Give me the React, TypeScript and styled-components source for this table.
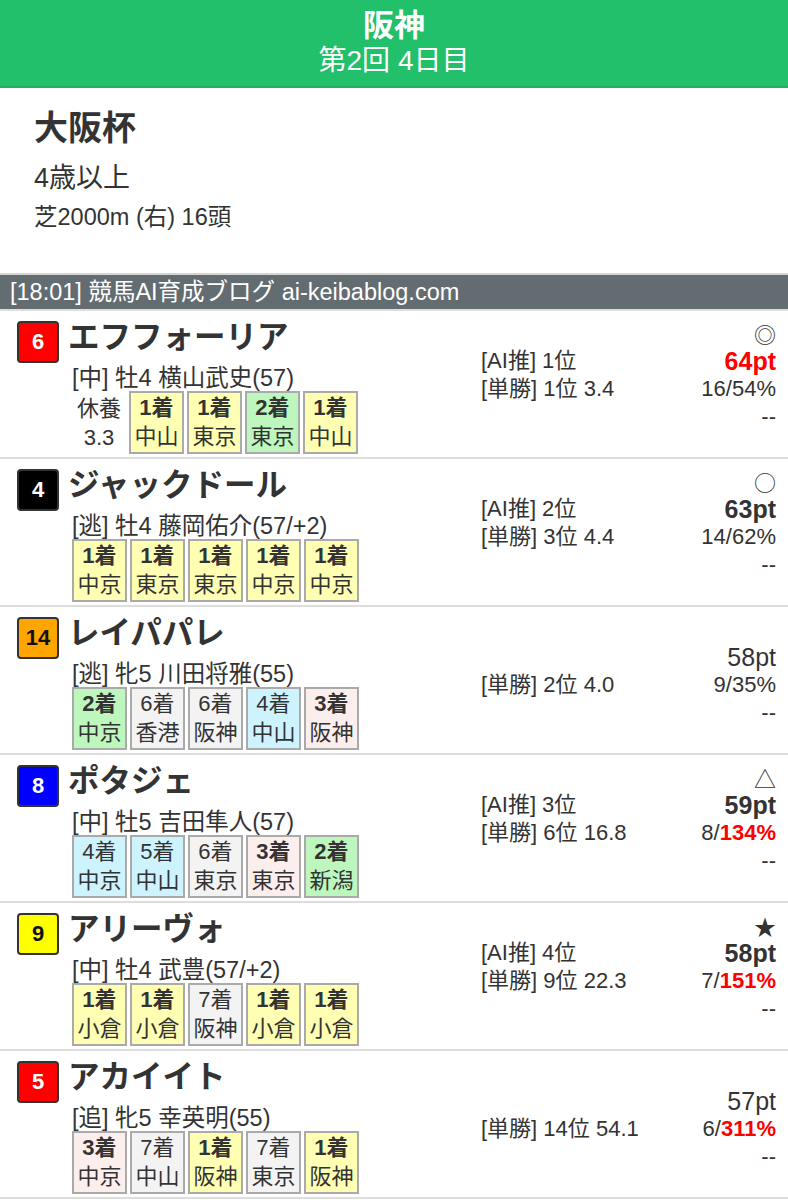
import React from "react";
import styled, { createGlobalStyle } from "styled-components";

const GlobalStyle = createGlobalStyle`
  body {
    margin: 0;
    background: #fff;
    color: #333;
    font-family: "Liberation Sans", "Noto Sans CJK JP", sans-serif;
  }
`;

const Header = styled.header`
  background: #22c06b;
  color: #fff;
  text-align: center;
  height: 88px;
  box-sizing: border-box;
  padding-top: 8px;
  border-bottom: 2px solid #1fb062;
`;

const Venue = styled.div`
  font-size: 31px;
  font-weight: bold;
  line-height: 36px;
`;

const Kai = styled.div`
  font-size: 28px;
  line-height: 34px;
`;

const RaceInfo = styled.section`
  padding: 20px 34px 42px;
`;

const RaceName = styled.div`
  font-size: 34px;
  font-weight: bold;
  line-height: 40px;
`;

const RaceCond = styled.div`
  font-size: 27px;
  line-height: 34px;
  margin-top: 13px;
`;

const RaceCourse = styled.div`
  font-size: 23.5px;
  line-height: 28px;
  margin-top: 8px;
`;

const InfoBar = styled.div`
  background: #636c71;
  color: #fff;
  font-size: 23.5px;
  line-height: 34px;
  padding: 0 10px;
  border-top: 2px solid #d5d5d5;
  border-bottom: 2px solid #dedede;
  white-space: nowrap;
`;

const Card = styled.div`
  display: grid;
  grid-template-columns: 464px 1fr auto;
  padding: 0 12px 3px 17px;
  border-bottom: 2px solid #dddddd;
  height: 148px;
  box-sizing: border-box;
`;

const LeftCol = styled.div`
  display: flex;
  flex-direction: column;
`;

const NameRow = styled.div`
  display: flex;
  align-items: flex-start;
  gap: 9px;
  padding-top: 10px;
`;

const NumBox = styled.div<{ $bg: string; $fg: string }>`
  width: 42px;
  height: 42px;
  box-sizing: border-box;
  border: 2px solid #333;
  border-radius: 4px;
  background: ${(p) => p.$bg};
  color: ${(p) => p.$fg};
  font-family: "Liberation Sans", sans-serif;
  font-size: 22px;
  font-weight: bold;
  display: flex;
  align-items: center;
  justify-content: center;
`;

const HorseName = styled.div`
  font-size: 31.5px;
  font-weight: bold;
  line-height: 36px;
  margin-top: -2px;
`;

const Sub = styled.div`
  padding-left: 55px;
`;

const Jockey = styled.div`
  font-size: 23.5px;
  line-height: 26px;
  margin-top: 2px;
  white-space: nowrap;
`;

const Results = styled.div`
  display: flex;
  align-items: center;
  gap: 3px;
`;

const Rest = styled.div`
  width: 54px;
  text-align: center;
  font-size: 22px;
  line-height: 29px;
`;

const ResultBox = styled.div<{ $bg: string }>`
  width: 55px;
  box-sizing: border-box;
  border: 2px solid #aaa;
  background: ${(p) => p.$bg};
  text-align: center;
  font-size: 22px;
  line-height: 29px;
  padding-bottom: 1px;
`;

const Rank = styled.div<{ $bold: boolean }>`
  font-weight: ${(p) => (p.$bold ? "bold" : "normal")};
`;

const MidCol = styled.div`
  padding-top: 36px;
  font-size: 22px;
`;

const Line = styled.div`
  height: 28px;
  line-height: 28px;
  white-space: nowrap;
`;

const RightCol = styled.div`
  padding-top: 8px;
  text-align: right;
  font-size: 22px;
`;

const Mark = styled.div`
  height: 28px;
  line-height: 28px;
  font-size: 22px;
  font-family: "Noto Sans CJK JP", sans-serif;
`;

const Pt = styled.div<{ $bold: boolean; $red: boolean }>`
  height: 28px;
  line-height: 28px;
  font-size: 25px;
  font-weight: ${(p) => (p.$bold ? "bold" : "normal")};
  color: ${(p) => (p.$red ? "#ff0000" : "#333")};
`;

const Red = styled.span`
  color: #ff0000;
  font-weight: bold;
`;

const resultColor = (r: number) => {
  if (r === 1) return "#ffffb3";
  if (r === 2) return "#bdf7bd";
  if (r === 3) return "#fdeeee";
  if (r <= 5) return "#cdf3ff";
  return "#f3f3f3";
};

type Horse = {
  num: number;
  bg: string;
  fg: string;
  name: string;
  info: string;
  rest?: [string, string];
  results: [number, string][];
  ai?: string;
  tan: string;
  mark?: string;
  pt: string;
  ptBold: boolean;
  ptRed?: boolean;
  hits: string;
  rate: string;
  rateRed?: boolean;
};

const horses: Horse[] = [
  {
    num: 6, bg: "#ff0000", fg: "#fff", name: "エフフォーリア",
    info: "[中] 牡4 横山武史(57)", rest: ["休養", "3.3"],
    results: [[1, "中山"], [1, "東京"], [2, "東京"], [1, "中山"]],
    ai: "[AI推] 1位", tan: "[単勝] 1位 3.4", mark: "◎",
    pt: "64pt", ptBold: true, ptRed: true, hits: "16/", rate: "54%",
  },
  {
    num: 4, bg: "#000000", fg: "#fff", name: "ジャックドール",
    info: "[逃] 牡4 藤岡佑介(57/+2)",
    results: [[1, "中京"], [1, "東京"], [1, "東京"], [1, "中京"], [1, "中京"]],
    ai: "[AI推] 2位", tan: "[単勝] 3位 4.4", mark: "○",
    pt: "63pt", ptBold: true, hits: "14/", rate: "62%",
  },
  {
    num: 14, bg: "#ffa500", fg: "#111", name: "レイパパレ",
    info: "[逃] 牝5 川田将雅(55)",
    results: [[2, "中京"], [6, "香港"], [6, "阪神"], [4, "中山"], [3, "阪神"]],
    tan: "[単勝] 2位 4.0",
    pt: "58pt", ptBold: false, hits: "9/", rate: "35%",
  },
  {
    num: 8, bg: "#0000ff", fg: "#fff", name: "ポタジェ",
    info: "[中] 牡5 吉田隼人(57)",
    results: [[4, "中京"], [5, "中山"], [6, "東京"], [3, "東京"], [2, "新潟"]],
    ai: "[AI推] 3位", tan: "[単勝] 6位 16.8", mark: "△",
    pt: "59pt", ptBold: true, hits: "8/", rate: "134%", rateRed: true,
  },
  {
    num: 9, bg: "#ffff00", fg: "#111", name: "アリーヴォ",
    info: "[中] 牡4 武豊(57/+2)",
    results: [[1, "小倉"], [1, "小倉"], [7, "阪神"], [1, "小倉"], [1, "小倉"]],
    ai: "[AI推] 4位", tan: "[単勝] 9位 22.3", mark: "★",
    pt: "58pt", ptBold: true, hits: "7/", rate: "151%", rateRed: true,
  },
  {
    num: 5, bg: "#ff0000", fg: "#fff", name: "アカイイト",
    info: "[追] 牝5 幸英明(55)",
    results: [[3, "中京"], [7, "中山"], [1, "阪神"], [7, "東京"], [1, "阪神"]],
    tan: "[単勝] 14位 54.1",
    pt: "57pt", ptBold: false, hits: "6/", rate: "311%", rateRed: true,
  },
];

const HorseCard = ({ h }: { h: Horse }) => (
  <Card>
    <LeftCol>
      <NameRow>
        <NumBox $bg={h.bg} $fg={h.fg}>{h.num}</NumBox>
        <HorseName>{h.name}</HorseName>
      </NameRow>
      <Sub>
        <Jockey>{h.info}</Jockey>
        <Results>
          {h.rest && (
            <Rest>
              <div>{h.rest[0]}</div>
              <div>{h.rest[1]}</div>
            </Rest>
          )}
          {h.results.map(([r, place], i) => (
            <ResultBox key={i} $bg={resultColor(r)}>
              <Rank $bold={r <= 3}>{r}着</Rank>
              <div>{place}</div>
            </ResultBox>
          ))}
        </Results>
      </Sub>
    </LeftCol>
    <MidCol>
      <Line>{h.ai ?? ""}</Line>
      <Line>{h.tan}</Line>
    </MidCol>
    <RightCol>
      <Mark>{h.mark ?? ""}</Mark>
      <Pt $bold={h.ptBold} $red={!!h.ptRed}>{h.pt}</Pt>
      <Line>
        {h.hits}
        {h.rateRed ? <Red>{h.rate}</Red> : h.rate}
      </Line>
      <Line>--</Line>
    </RightCol>
  </Card>
);

export default function App() {
  return (
    <>
      <GlobalStyle />
      <Header>
        <Venue>阪神</Venue>
        <Kai>第2回 4日目</Kai>
      </Header>
      <RaceInfo>
        <RaceName>大阪杯</RaceName>
        <RaceCond>4歳以上</RaceCond>
        <RaceCourse>芝2000m (右) 16頭</RaceCourse>
      </RaceInfo>
      <InfoBar>[18:01] 競馬AI育成ブログ ai-keibablog.com</InfoBar>
      {horses.map((h) => (
        <HorseCard key={h.num} h={h} />
      ))}
    </>
  );
}
